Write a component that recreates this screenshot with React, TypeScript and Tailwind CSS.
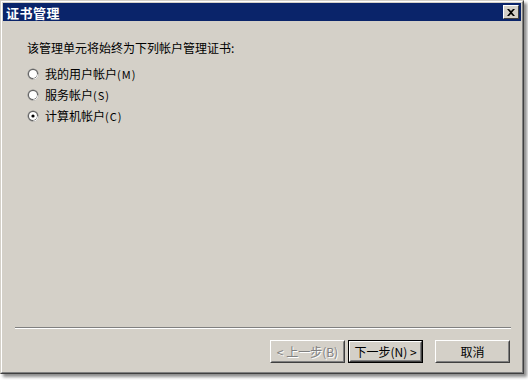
import React from 'react';

const font = { fontFamily: '"Noto Sans CJK SC", "Liberation Sans", sans-serif' };

const options = [
  { label: '我的用户帐户', key: 'M', checked: false },
  { label: '服务帐户', key: 'S', checked: false },
  { label: '计算机帐户', key: 'C', checked: true },
];

export default function App() {
  return (
    <div className="w-[528px] h-[380px] bg-white" style={font}>
      <div className="w-[524px] h-[374px] bg-[#d4d0c8] border border-t-[#d4d0c8] border-l-[#d4d0c8] border-r-[#404040] border-b-[#404040] shadow-[3px_3px_3px_rgba(0,0,0,0.45)]">
        <div className="flex flex-col h-full border border-t-white border-l-white border-r-[#808080] border-b-[#808080] p-px">
          <div className="flex items-center h-[18px] bg-[#0a246a] pl-[3px] pr-[2px]">
            <span className="flex-1 text-[13px] font-bold text-white leading-none tracking-[0.5px]">证书管理</span>
            <CloseButton />
          </div>

          <div className="flex flex-col flex-1 pl-[24px] pt-[19px]">
            <p className="text-[12px] leading-[16px] text-black">该管理单元将始终为下列帐户管理证书:</p>
            <div className="flex flex-col gap-[5px] mt-[10px]">
              {options.map((o) => (
                <div key={o.key} className="flex items-center gap-[6px] h-[16px]">
                  <Radio checked={o.checked} />
                  <span className="text-[12px] leading-[16px] text-black">
                    {o.label}
                    <span className="text-[11px] tracking-[1px]">({o.key})</span>
                  </span>
                </div>
              ))}
            </div>
          </div>

          <div className="mx-[12px] mr-[10px] border-t border-t-[#808080] border-b border-b-white" />

          <div className="flex justify-end gap-[3px] pr-[11px] pt-[11px] pb-[8px] h-[42px]">
            <Button disabled>&lt; 上一步(B)</Button>
            <Button focused>下一步(N) &gt;</Button>
            <div className="w-[6px]" />
            <Button>取消</Button>
          </div>
        </div>
      </div>
    </div>
  );
}

function CloseButton() {
  return (
    <div className="w-[16px] h-[14px] bg-[#d4d0c8] border border-t-white border-l-white border-r-[#404040] border-b-[#404040] flex items-center justify-center">
      <svg width="8" height="7" viewBox="0 0 8 7">
        <path d="M0 0h2l2 2 2-2h2L5 3.5 8 7H6L4 5 2 7H0l3-3.5z" fill="black" />
      </svg>
    </div>
  );
}

function Radio({ checked }: { checked: boolean }) {
  return (
    <svg width="12" height="12" viewBox="0 0 12 12">
      <circle cx="6" cy="6" r="5.5" fill="#808080" />
      <circle cx="6" cy="6" r="5.5" fill="white" clipPath="inset(50% 0 0 50%)" />
      <circle cx="6" cy="6" r="4.5" fill="#404040" />
      <circle cx="6" cy="6" r="4" fill="white" />
      {checked && <circle cx="6" cy="6" r="1.6" fill="black" />}
    </svg>
  );
}

function Button({
  children,
  disabled,
  focused,
}: {
  children: React.ReactNode;
  disabled?: boolean;
  focused?: boolean;
}) {
  return (
    <div className={`w-[75px] h-[23px] ${focused ? 'border border-black' : ''}`}>
      <div className="h-full border border-t-white border-l-white border-r-[#404040] border-b-[#404040]">
        <div
          className={`h-full flex items-center justify-center text-[12px] border border-t-[#d4d0c8] border-l-[#d4d0c8] border-r-[#808080] border-b-[#808080] ${
            disabled ? 'text-[#808080] [text-shadow:1px_1px_0_white]' : 'text-black'
          }`}
        >
          {children}
        </div>
      </div>
    </div>
  );
}
